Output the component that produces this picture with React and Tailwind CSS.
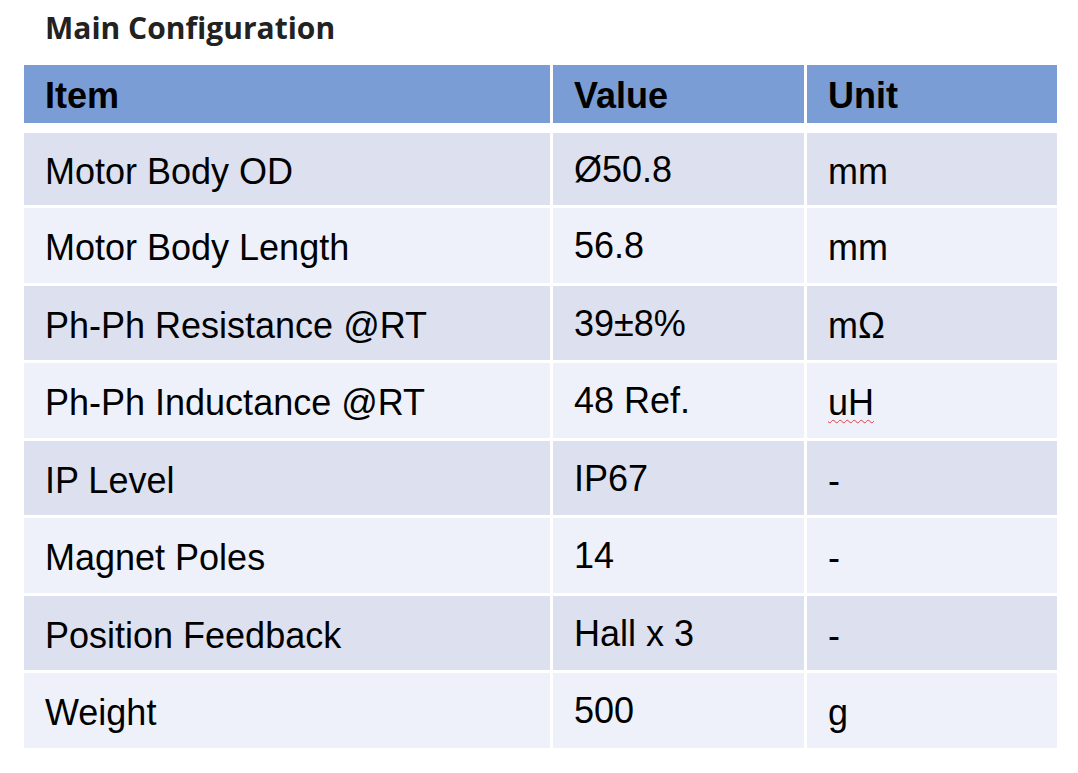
import React from "react";

const rows = [
  ["Motor Body OD", "Ø50.8", "mm"],
  ["Motor Body Length", "56.8", "mm"],
  ["Ph-Ph Resistance @RT", "39±8%", "mΩ"],
  ["Ph-Ph Inductance @RT", "48 Ref.", "uH"],
  ["IP Level", "IP67", "-"],
  ["Magnet Poles", "14", "-"],
  ["Position Feedback", "Hall x 3", "-"],
  ["Weight", "500", "g"],
];

export default function App() {
  return (
    <div className="w-[1078px] h-[773px] bg-white overflow-hidden">
      {/* Title */}
      <div className="pl-[45px] pt-[10px] h-[65px]">
        <h2 className="text-[30px] leading-[36px] font-bold text-[#222] font-['Open_Sans',sans-serif]">
          Main Configuration
        </h2>
      </div>

      {/* Header */}
      <div className="ml-[24px] w-[1033px] grid grid-cols-[526px_251px_250px] gap-x-[3px] font-['Liberation_Sans',Arial,sans-serif] text-[36px] text-black font-bold">
        <div className="h-[58px] bg-[#7b9dd5] flex items-center pl-[21px] pt-[4px]">Item</div>
        <div className="h-[58px] bg-[#7b9dd5] flex items-center pl-[21px] pt-[4px]">Value</div>
        <div className="h-[58px] bg-[#7b9dd5] flex items-center pl-[21px] pt-[4px]">Unit</div>
      </div>

      {/* Body rows */}
      <div className="mt-[10px] ml-[24px] w-[1033px] flex flex-col gap-[3px] font-['Liberation_Sans',Arial,sans-serif] text-[36px] text-black">
        {rows.map(([item, value, unit], i) => {
          const bg = i % 2 === 0 ? "bg-[#dde1ef]" : "bg-[#eef1f9]";
          const h = i === 0 ? "h-[72px]" : "h-[74.5px]";
          return (
            <div key={item} className={`${h} grid grid-cols-[526px_251px_250px] gap-x-[3px]`}>
              <div className={`${bg} flex items-center pl-[21px] pt-[6px]`}>{item}</div>
              <div className={`${bg} flex items-center pl-[21px] pt-[2px]`}>{value}</div>
              <div className={`${bg} flex items-center pl-[21px] pt-[6px]`}>
                {unit === "uH" ? (
                  <span className="underline decoration-wavy decoration-[#e04040] decoration-1 underline-offset-[4px]">
                    uH
                  </span>
                ) : (
                  unit
                )}
              </div>
            </div>
          );
        })}
      </div>
    </div>
  );
}
